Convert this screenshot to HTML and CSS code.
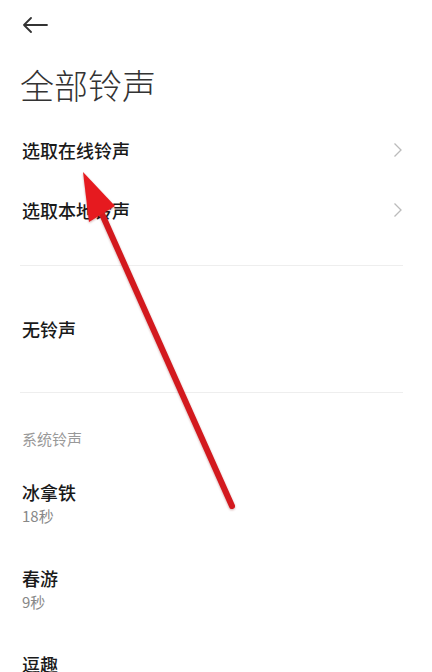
FILE: index.html
```html
<!DOCTYPE html>
<html lang="zh-CN">
<head>
    <meta charset="UTF-8">
    <meta name="viewport" content="width=device-width, initial-scale=1.0">
    <title>全部铃声</title>
    <link rel="stylesheet" href="styles.css">
</head>
<body>
    <div class="page">
        <div class="topbar">
            <svg class="back" width="26" height="16" viewBox="0 0 26 16">
                <path d="M25 8H2M9 1L2 8l7 7" fill="none" stroke="#333" stroke-width="1.8" stroke-linecap="round" stroke-linejoin="round"/>
            </svg>
        </div>

        <h1 class="title">全部铃声</h1>

        <div class="row">
            <span>选取在线铃声</span>
            <svg class="chevron" width="10" height="16" viewBox="0 0 10 16">
                <path d="M1.5 1.5L8 8l-6.5 6.5" fill="none" stroke="#bbb" stroke-width="1.3"/>
            </svg>
        </div>
        <div class="row">
            <span>选取本地铃声</span>
            <svg class="chevron" width="10" height="16" viewBox="0 0 10 16">
                <path d="M1.5 1.5L8 8l-6.5 6.5" fill="none" stroke="#bbb" stroke-width="1.3"/>
            </svg>
        </div>

        <div class="divider first"></div>
        <div class="row none">
            <span>无铃声</span>
        </div>
        <div class="divider"></div>

        <div class="label">系统铃声</div>

        <div class="item">
            <div class="name">冰拿铁</div>
            <div class="length">18秒</div>
        </div>
        <div class="item">
            <div class="name">春游</div>
            <div class="length">9秒</div>
        </div>
        <div class="item">
            <div class="name">逗趣</div>
        </div>
    </div>

    <!-- red pointer drawn on top of the list -->
    <svg class="pointer" width="432" height="672" viewBox="0 0 432 672">
        <line x1="232" y1="506" x2="98" y2="205" stroke="#d3191e" stroke-width="6" stroke-linecap="round"/>
        <polygon points="83,172 115,206 89,222" fill="#e61a1f"/>
    </svg>
</body>
</html>
```

FILE: styles.css
```css
body {
    margin: 0;
    background: #fff;
    font-family: "Noto Sans CJK SC", "Noto Sans", sans-serif;
    color: #1a1a1a;
    overflow: hidden;
}
.page {
    padding: 0 29px 0 22px;
    height: 672px;
    overflow: hidden;
}
.topbar {
    height: 50px;
    display: flex;
    align-items: center;
}
.title {
    margin: 10px 0 10px -2px;
    font-size: 34px;
    line-height: 50px;
    font-weight: 300;
    color: #333;
}
.row {
    height: 60px;
    display: flex;
    align-items: center;
    justify-content: space-between;
    font-size: 18px;
    font-weight: 500;
}
.row.none {
    height: 126px;
}
.divider {
    height: 1px;
    background: #eeeeee;
    margin-left: -2px;
}
.divider.first {
    margin-top: 25px;
}
.label {
    margin-top: 36px;
    font-size: 15px;
    line-height: 20px;
    color: #999;
}
.item {
    padding: 31px 0 7px;
}
.name {
    font-size: 18px;
    line-height: 24px;
    font-weight: 500;
}
.length {
    font-size: 15px;
    line-height: 24px;
    color: #888;
}
.pointer {
    position: absolute;
    top: 0;
    left: 0;
    filter: drop-shadow(0 1px 1px rgba(120, 0, 0, 0.35));
}
```
